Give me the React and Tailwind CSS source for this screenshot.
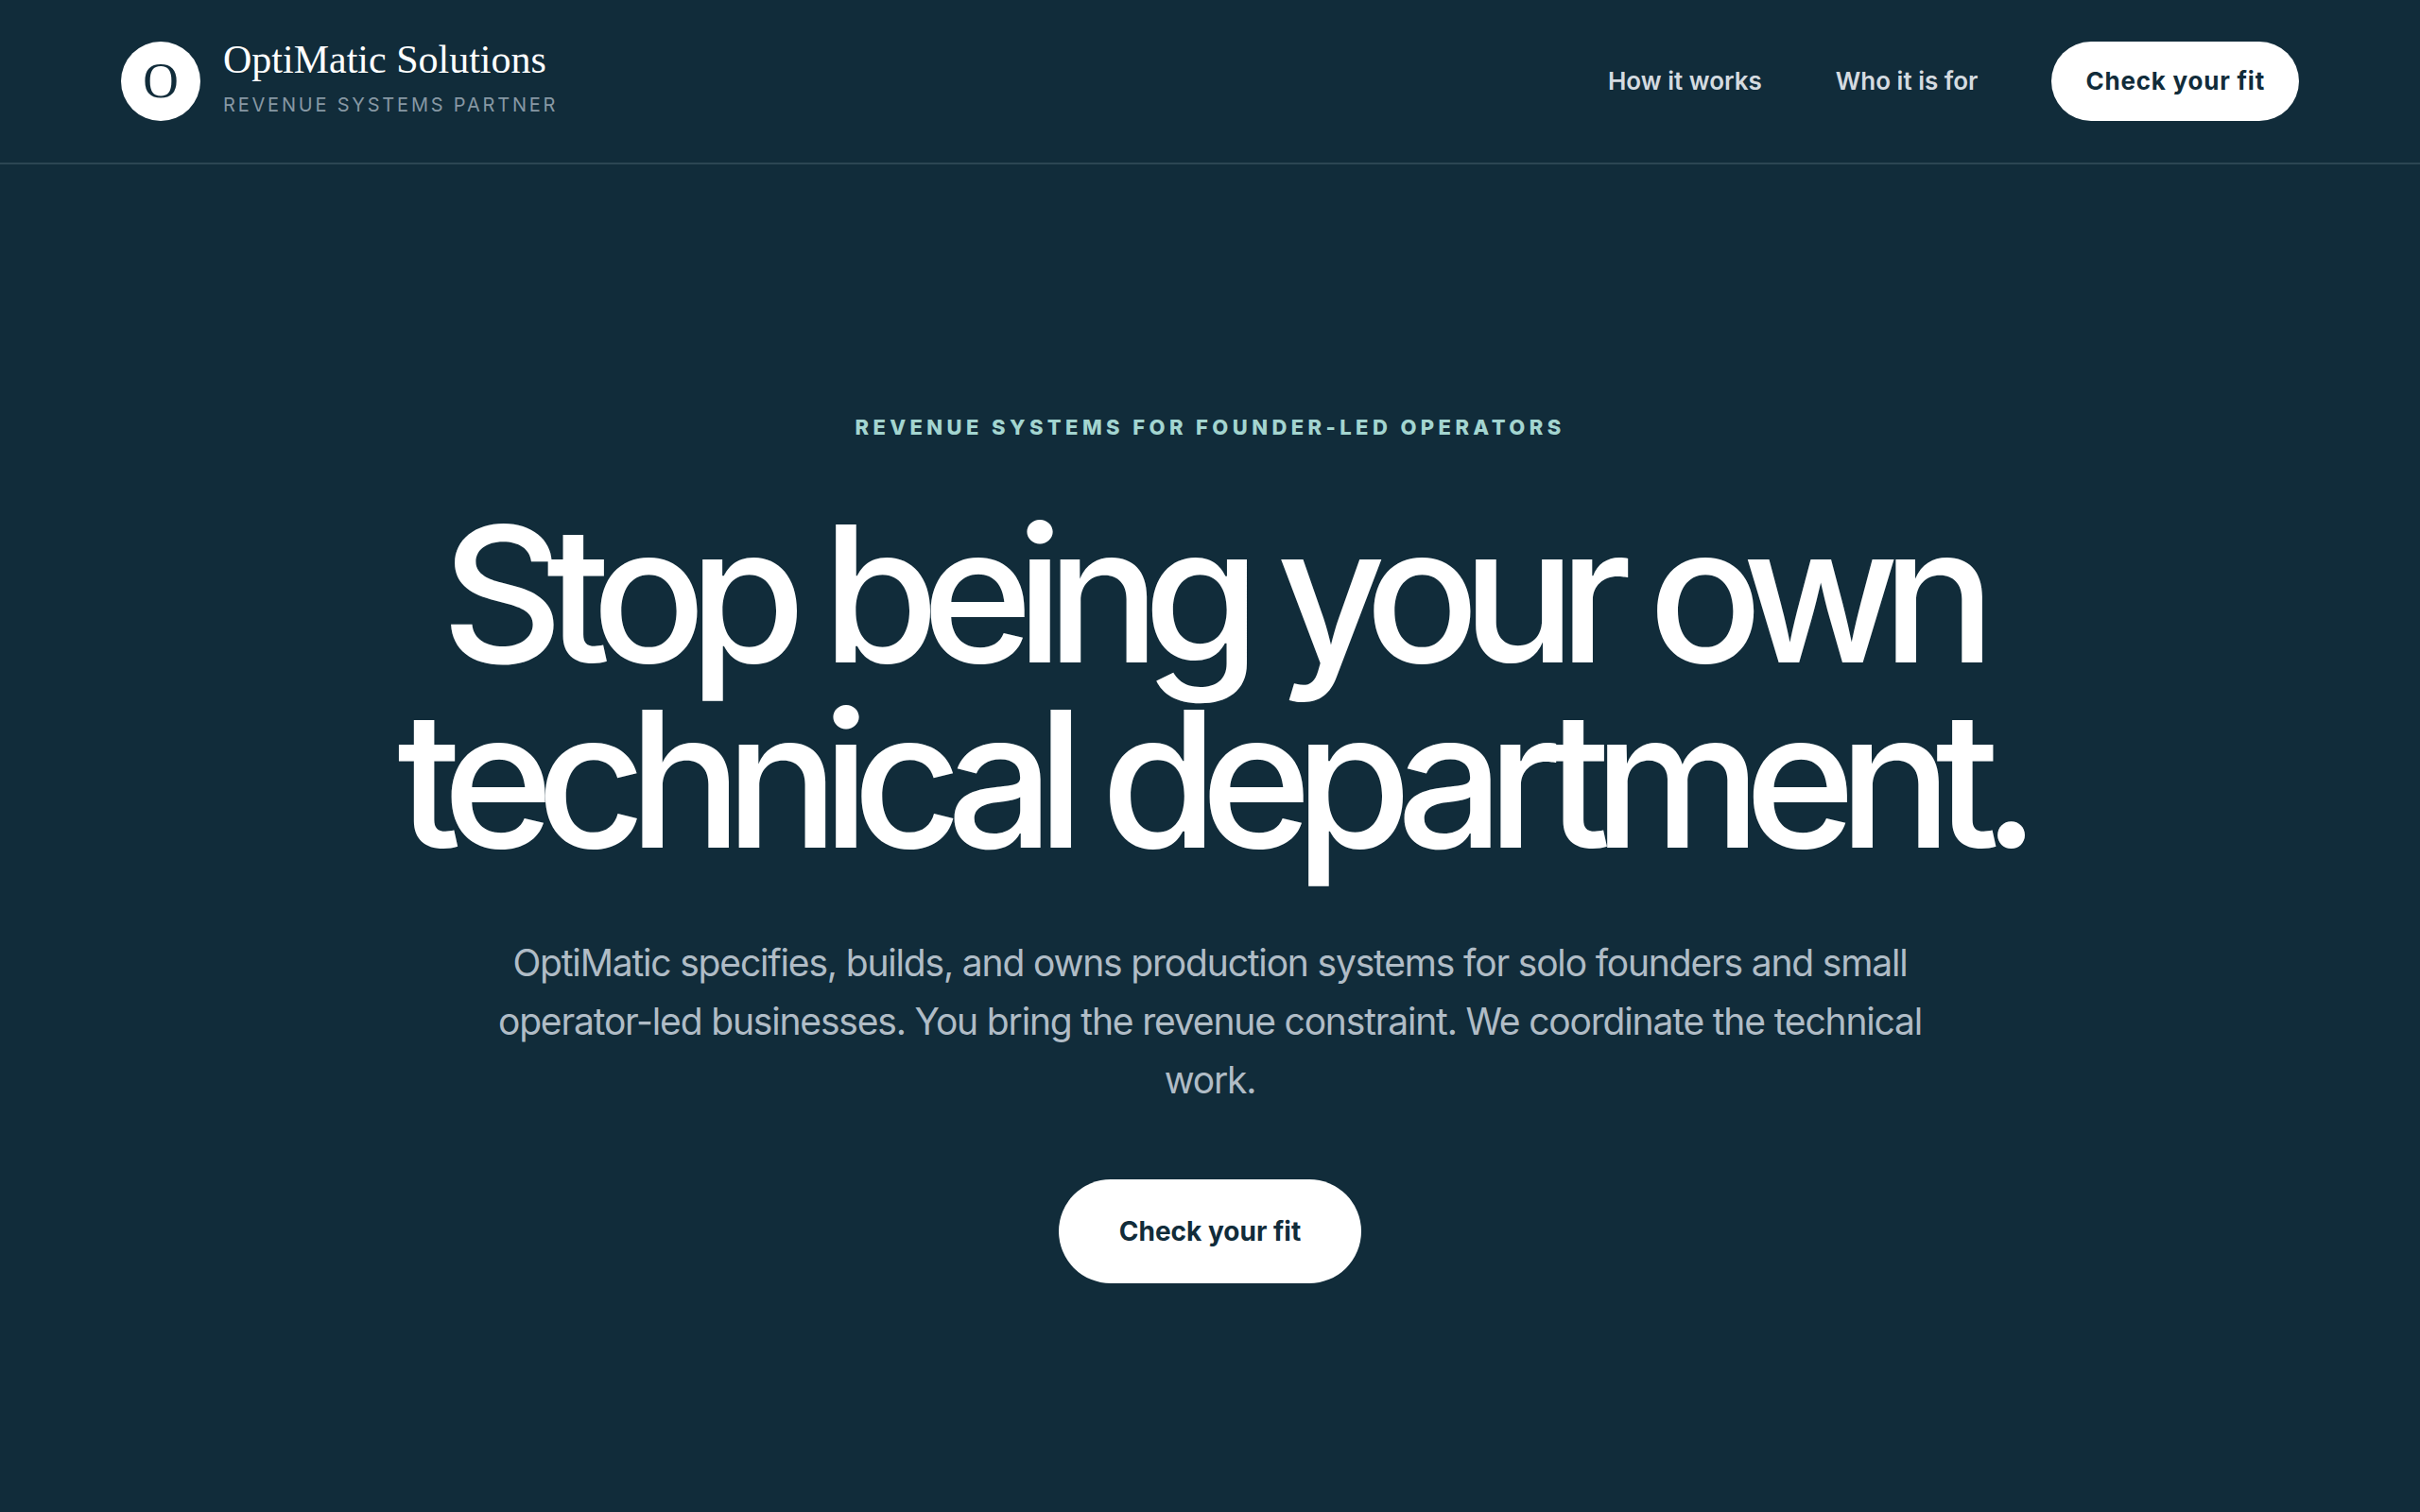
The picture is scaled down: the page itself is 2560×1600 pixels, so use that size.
const navLinks = [
  { label: 'How it works', href: '#how-it-works' },
  { label: 'Who it is for', href: '#who-it-is-for' },
];

function Brand() {
  return (
    <a href="#top" className="flex items-center gap-6">
      <span className="flex size-[84px] items-center justify-center rounded-full bg-white font-['Liberation_Serif',serif] text-[52px] leading-none text-[#112c3a]">
        O
      </span>
      <span className="flex flex-col gap-[14px]">
        <span className="font-['Liberation_Serif',serif] text-[42px] leading-9 text-white">
          OptiMatic Solutions
        </span>
        <span className="text-[20px] leading-8 tracking-[0.14em] text-[#8798a4] uppercase">
          Revenue systems partner
        </span>
      </span>
    </a>
  );
}

function Header() {
  return (
    <header className="border-b-2 border-[#2c4653] px-[5%] py-11">
      <div className="flex items-center justify-between">
        <Brand />
        <nav className="flex items-center gap-[78px] text-[26px] leading-8 font-semibold">
          {navLinks.map((link) => (
            <a key={link.href} href={link.href} className="text-[#d5dbe0]">
              {link.label}
            </a>
          ))}
          <button
            type="button"
            className="h-[84px] rounded-full bg-white px-9 font-bold tracking-[0.03em] text-[#112c3a]"
          >
            Check your fit
          </button>
        </nav>
      </div>
    </header>
  );
}

function Hero() {
  return (
    <main className="flex flex-col items-center px-[5%] pt-[260px] pb-60 text-center">
      <p className="text-[22px] leading-9 font-extrabold tracking-[0.2em] text-[#a3d5d0] uppercase">
        Revenue systems for founder-led operators
      </p>
      <h1 className="mt-[60px] max-w-[1840px] text-[200px] leading-[196px] font-medium tracking-[-0.09em] text-white">
        Stop being your own technical department.
      </h1>
      <p className="mt-[66px] max-w-[1520px] text-[39px] leading-[62px] tracking-[-0.03em] text-[#b0bcc6]">
        OptiMatic specifies, builds, and owns production systems for solo founders and small operator-led
        businesses. You bring the revenue constraint. We coordinate the technical work.
      </p>
      <button
        type="button"
        className="mt-[74px] h-[110px] rounded-full bg-white px-16 text-[28px] font-bold text-[#112c3a]"
      >
        Check your fit
      </button>
    </main>
  );
}

export default function App() {
  return (
    <div id="top" className="min-h-screen bg-[#112c3a] font-['Inter',sans-serif]">
      <Header />
      <Hero />
    </div>
  );
}
